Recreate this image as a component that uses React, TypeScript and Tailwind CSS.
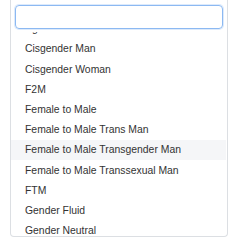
import React from 'react';

const OPTIONS = [
  'Agender',
  'Cisgender Man',
  'Cisgender Woman',
  'F2M',
  'Female to Male',
  'Female to Male Trans Man',
  'Female to Male Transgender Man',
  'Female to Male Transsexual Man',
  'FTM',
  'Gender Fluid',
  'Gender Neutral',
];

export default function App() {
  return (
    <div className="w-[238px] h-[240px] bg-white overflow-hidden" style={{ fontFamily: '"Liberation Sans", Arial, sans-serif' }}>
      <div className="ml-[10px] w-[218px] border-x border-b border-[#dcdfe3] rounded-b-[4px] bg-white pb-[2px]">
        {/* Search */}
        <div className="px-[4px] pt-[5px] pb-[3px]">
          <input
            type="text"
            className="block w-full h-[24px] rounded-[4px] border border-[#8cb9f2] outline-none shadow-[0_0_0_1px_rgba(120,170,240,0.25)] px-2 text-[11px]"
          />
        </div>

        {/* Options list, scrolled */}
        <div className="h-[202px] overflow-hidden">
          <ul className="-mt-[13px]">
            {OPTIONS.map((o) => (
              <li
                key={o}
                className={`h-[20.2px] flex items-center pl-[14px] text-[10.4px] text-[#333] mr-[1px] ${
                  o === 'Female to Male Transgender Man' ? 'bg-[#f5f6f8]' : ''
                }`}
              >
                {o}
              </li>
            ))}
          </ul>
        </div>
      </div>
    </div>
  );
}
